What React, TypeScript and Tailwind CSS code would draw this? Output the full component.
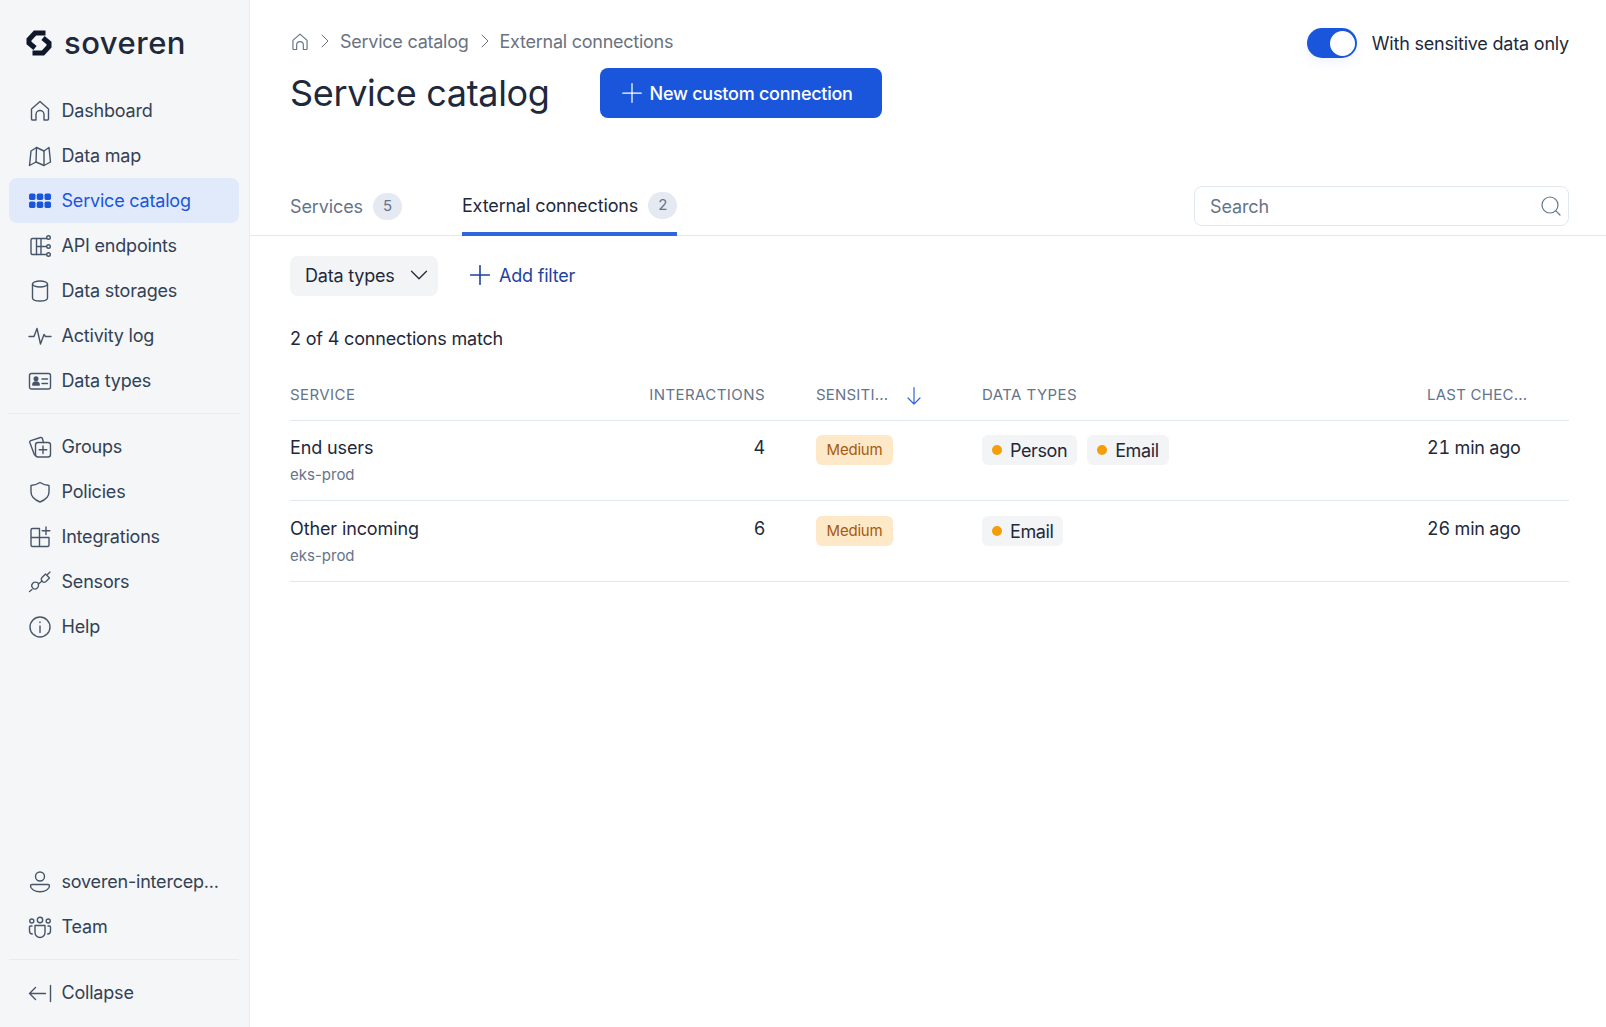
import React from 'react';
import { ChevronDown, ChevronRight, Search } from 'lucide-react';

type IconProps = { className?: string };

const Svg: React.FC<React.PropsWithChildren<IconProps>> = ({ children, className }) => (
  <svg
    viewBox="0 0 24 24"
    fill="none"
    stroke="currentColor"
    strokeWidth={1.4}
    strokeLinecap="round"
    strokeLinejoin="round"
    className={className ?? 'block w-6 h-6 shrink-0'}
  >
    {children}
  </svg>
);

const HomeIcon = ({ className }: IconProps) => (
  <Svg className={className}>
    <path d="M3.500 20V10L12 2.500l8.500 7.500v10a1 1 0 0 1-1 1H16v-5.500a4 4 0 0 0-8 0V21H4.500a1 1 0 0 1-1-1z" />
  </Svg>
);
const MapIcon = () => (
  <Svg>
    <path d="M8.500 3.500 3 7 1.500 21.500 8 18l8 3.500 6.500-3.500L21 3.500 16 7 8.500 3.500z" />
    <path d="M8.500 3.500 8 18M16 7v14.500" />
  </Svg>
);
const GridIcon = () => (
  <svg viewBox="0 0 24 24" fill="currentColor" className="block w-6 h-6 shrink-0">
    <rect x="1" y="4.500" width="6.500" height="6.500" rx="1.700" />
    <rect x="8.750" y="4.500" width="6.500" height="6.500" rx="1.700" />
    <rect x="16.500" y="4.500" width="6.500" height="6.500" rx="1.700" />
    <rect x="1" y="12.500" width="6.500" height="6.500" rx="1.700" />
    <rect x="8.750" y="12.500" width="6.500" height="6.500" rx="1.700" />
    <rect x="16.500" y="12.500" width="6.500" height="6.500" rx="1.700" />
  </svg>
);
const ApiIcon = () => (
  <Svg>
    <path d="M18.500 4.500H4.500A1.500 1.500 0 0 0 3 6v13a1.500 1.500 0 0 0 1.500 1.500h13.500" />
    <path d="M8.500 4.500v16M8.500 12.500h9.500M13 5v15" />
    <circle cx="20.500" cy="3.500" r="1.800" />
    <circle cx="20.500" cy="12.500" r="1.800" />
    <circle cx="20.500" cy="20.500" r="1.800" />
  </Svg>
);
const StorageIcon = () => (
  <Svg>
    <ellipse cx="12" cy="5" rx="7.500" ry="3" />
    <path d="M4.500 5v14c0 1.700 3.400 3 7.500 3s7.500-1.300 7.500-3V5" />
  </Svg>
);
const ActivityIcon = () => (
  <Svg>
    <path d="M1 12.500h5L9 4.500l3.500 15.500L16 10.500l1.500 2h5.500" />
  </Svg>
);
const IdIcon = () => (
  <Svg>
    <rect x="1.500" y="4.500" width="21" height="15.500" rx="2" />
    <circle cx="8" cy="9.800" r="1.800" fill="currentColor" />
    <path d="M4.800 16c0-2 1.400-3 3.200-3s3.200 1 3.200 3z" fill="currentColor" />
    <path d="M14 10h5.500M14 14.500h5.500" />
  </Svg>
);
const GroupsIcon = () => (
  <Svg>
    <path d="M6.500 20 1.800 7.500a1.500 1.500 0 0 1 1-1.900L12.500 2.500a1.500 1.500 0 0 1 1.900 1l1.100 4" />
    <rect x="7.500" y="7.500" width="15" height="14.500" rx="2.500" />
    <path d="M15 11v7.500M11.200 14.800h7.600" />
  </Svg>
);
const ShieldIcon = () => (
  <Svg>
    <path d="M12 2.500c3 2 5.500 2.800 9 3V12c0 4.800-3.500 7.800-9 10C6.500 19.800 3 16.800 3 12V5.500c3.500-.2 6-1 9-3z" />
  </Svg>
);
const IntegrationsIcon = () => (
  <Svg>
    <path d="M11.500 3.500h-7A1.500 1.500 0 0 0 3 5v15a1.500 1.500 0 0 0 1.500 1.500h15A1.500 1.500 0 0 0 21 20v-7.500H3M11.500 3.500v18" />
    <path d="M18 2v7.500M14.200 5.800h7.600" />
  </Svg>
);
const PlugIcon = () => (
  <svg viewBox="0 0 24 24" fill="none" stroke="currentColor" strokeWidth={1.25} strokeLinecap="round" strokeLinejoin="round" className="block w-6 h-6 shrink-0">
    <path d="M1.500 21.500l2.500-2" />
    <path d="M9.500 11.500c-2-.8-3.500-.5-4.800.8-1.300 1.400-1.300 3.300 0 4.700 1.400 1.300 3.300 1.300 4.600 0 1.300-1.300 1.600-2.900.8-4.800z" transform="translate(0 1)" />
    <path d="M10.500 14l3.500-3" />
    <path d="M14 7.500l3.500-3.500 4 4-3.500 3.500c-1.200 1-2.700 1-3.800-.2-1.100-1.100-1.300-2.600-.2-3.800z" />
    <path d="M22 2l-2.500 2.500" />
  </svg>
);
const InfoIcon = () => (
  <Svg>
    <circle cx="12" cy="12" r="10" />
    <path d="M12 11v6.500M12 7v.5" />
  </Svg>
);
const UserIcon = () => (
  <Svg>
    <circle cx="12" cy="6.500" r="4.500" />
    <path d="M4 14.500h16a1.500 1.500 0 0 1 1.500 1.500c0 3-4.200 5.800-9.500 5.800S2.500 19 2.500 16A1.500 1.500 0 0 1 4 14.500z" />
  </Svg>
);
const TeamIcon = () => (
  <Svg>
    <circle cx="12" cy="5" r="2.700" />
    <circle cx="3.800" cy="6" r="2" />
    <circle cx="20.200" cy="6" r="2" />
    <path d="M7 10.500h10v7a5 5 0 0 1-10 0z" />
    <path d="M4 11H2.500a1 1 0 0 0-1 1v4c0 1.700 1 3 2.800 3M20 11h1.500a1 1 0 0 1 1 1v4c0 1.700-1 3-2.800 3" />
  </Svg>
);
const CollapseIcon = () => (
  <Svg>
    <path d="M1.500 12.500h16M7.500 6.500l-6 6 6 6M22.500 4.500v16" />
  </Svg>
);

const PlusIcon = ({ strokeWidth = 1.25 }: { strokeWidth?: number }) => (
  <svg viewBox="0 0 20 20" className="block w-5 h-5 shrink-0" fill="none" stroke="currentColor" strokeWidth={strokeWidth} strokeLinecap="round">
    <path d="M10 .7v18.600M.7 10h18.600" />
  </svg>
);

const SortArrow = () => (
  <svg viewBox="0 0 14 18" className="block w-[14px] h-[18px] shrink-0 text-[#2f65dd]" fill="none" stroke="currentColor" strokeWidth={1.2} strokeLinecap="round" strokeLinejoin="round">
    <path d="M7 .7v16.300M1 11l6 6 6-6" />
  </svg>
);

const Logo = () => (
  <svg viewBox="0 0 26 26" className="block w-[26px] h-[26px] shrink-0" fill="none" stroke="#0f172a" strokeWidth={5}>
    <path d="M19.500 3H9L3 9.500v3.500L9 18" />
    <path d="M6.500 23H17l6-6.500V13l-6-5" />
  </svg>
);

const NavItem = ({ icon, label, active }: { icon: React.ReactNode; label: string; active?: boolean }) => (
  <div
    className={`flex items-center h-[45px] pl-[19px] gap-[9.5px] rounded-lg ${
      active ? 'bg-[#e1eafb] text-[#1a56db]' : 'text-[#334155]'
    }`}
  >
    <span className={active ? 'text-[#1a56db]' : 'text-[#475569]'}>{icon}</span>
    <span className="truncate">{label}</span>
  </div>
);

const Tag = ({ label }: { label: string }) => (
  <span className="inline-flex items-center h-[30px] px-[10px] gap-[8px] rounded-md bg-[#f3f4f6] text-[#1e293b] tracking-[-0.4px]">
    <span className="w-[10px] h-[10px] rounded-full bg-[#f59e0b]" />
    {label}
  </span>
);

const Medium = () => (
  <span className="inline-flex items-center justify-center w-[77px] h-[30px] rounded-md bg-[#fde8c8] text-[#a8590f] text-[15px]">
    Medium
  </span>
);

const rows = [
  { name: 'End users', count: 4, types: ['Person', 'Email'], last: '21 min ago' },
  { name: 'Other incoming', count: 6, types: ['Email'], last: '26 min ago' },
];

const columns = 'grid grid-cols-[360px_166px_166px_445px_142px]';

export default function App() {
  return (
    <div
      className="flex w-full h-[1027px] overflow-hidden bg-white text-[18px] tracking-[-0.2px] text-[#1e293b]"
      style={{ fontFamily: 'Inter, sans-serif' }}
    >
      {/* Sidebar */}
      <aside className="flex flex-col w-[250px] shrink-0 bg-[#f5f6f8] border-r border-[#e9ebef] pl-[9px] pr-[10px]">
        <div className="flex items-center h-[86px] mb-[2px] pl-[17px] gap-[12px]">
          <Logo />
          <span className="text-[31px] font-medium tracking-[0.5px] text-[#1e293b]">soveren</span>
        </div>
        <nav>
          <NavItem icon={<HomeIcon />} label="Dashboard" />
          <NavItem icon={<MapIcon />} label="Data map" />
          <NavItem icon={<GridIcon />} label="Service catalog" active />
          <NavItem icon={<ApiIcon />} label="API endpoints" />
          <NavItem icon={<StorageIcon />} label="Data storages" />
          <NavItem icon={<ActivityIcon />} label="Activity log" />
          <NavItem icon={<IdIcon />} label="Data types" />
        </nav>
        <div className="border-t border-[#e9ebef] mt-[10px] mb-[10px]" />
        <nav>
          <NavItem icon={<GroupsIcon />} label="Groups" />
          <NavItem icon={<ShieldIcon />} label="Policies" />
          <NavItem icon={<IntegrationsIcon />} label="Integrations" />
          <NavItem icon={<PlugIcon />} label="Sensors" />
          <NavItem icon={<InfoIcon />} label="Help" />
        </nav>
        <div className="mt-auto">
          <NavItem icon={<UserIcon />} label="soveren-intercep..." />
          <NavItem icon={<TeamIcon />} label="Team" />
          <div className="border-t border-[#e9ebef] mt-[10px] mb-[10px]" />
          <NavItem icon={<CollapseIcon />} label="Collapse" />
          <div className="h-[12px]" />
        </div>
      </aside>

      {/* Main */}
      <main className="flex-1 min-w-0">
        <div className="flex justify-between pl-[40px] pr-[37px] h-[175px]">
          <div>
            <div className="flex items-center h-[24px] mt-[29px] text-[#6b7280] tracking-[-0.25px]">
              <HomeIcon className="block w-[20px] h-[20px] mt-[1px] text-[#64748b]" />
              <ChevronRight className="w-[24px] h-[24px] ml-[3px] mr-[3px]" strokeWidth={1} />
              <span>Service catalog</span>
              <ChevronRight className="w-[24px] h-[24px] ml-[4px] mr-[3px]" strokeWidth={1} />
              <span>External connections</span>
            </div>
            <div className="flex items-center mt-[15px] gap-[50px]">
              <h1 className="text-[36px] font-normal tracking-[-0.33px] text-[#1e293b] leading-[50px]">Service catalog</h1>
              <button className="flex items-center h-[50px] w-[282px] pl-[22px] gap-[8px] rounded-lg bg-[#1a56db] text-white font-medium tracking-[-0.25px]">
                <PlusIcon />
                New custom connection
              </button>
            </div>
          </div>
          <div className="flex items-center h-[30px] mt-[28px] gap-[15px]">
            <div className="flex items-center justify-end w-[50px] h-[30px] rounded-full bg-[#1a56db] pr-[2px] shadow-[0_4px_12px_rgba(26,86,219,0.08)]">
              <span className="w-[25px] h-[25px] rounded-full bg-white" />
            </div>
            <span>With sensitive data only</span>
          </div>
        </div>

        {/* Tabs */}
        <div className="flex items-end h-[61px] pl-[40px] pr-[37px] border-b border-[#e5e7eb] tracking-[-0.12px]">
          <div className="flex items-center h-full gap-[10px] text-[#64748b] mr-[60px] pt-[3px]">
            Services
            <span className="flex items-center justify-center w-[29px] h-[27px] rounded-full bg-[#e5e9f2] text-[#64748b] text-[15px]">5</span>
          </div>
          <div className="flex items-center h-full gap-[10px] pt-[3px] border-b-[4px] border-[#2f65dd] text-[#1e293b] -mb-px">
            External connections
            <span className="flex items-center justify-center w-[29px] h-[27px] rounded-full bg-[#e5e9f2] text-[#64748b] text-[15px]">2</span>
          </div>
          <div className="ml-auto self-center flex items-center w-[375px] h-[40px] mt-[2px] pl-[15px] pr-[5px] rounded-lg border border-[#e2e8f0] text-[#64748b]">
            <span className="flex-1">Search</span>
            <Search className="w-[24px] h-[24px]" strokeWidth={1.2} />
          </div>
        </div>

        {/* Filters */}
        <div className="flex items-center pl-[40px] mt-[20px] gap-[32px]">
          <div className="flex items-center h-[40px] w-[148px] pl-[15px] pb-[2px] gap-[9px] rounded-lg bg-[#f3f4f6] text-[#1e293b]">
            Data types
            <ChevronDown className="w-[30px] h-[30px] shrink-0" strokeWidth={1} />
          </div>
          <div className="flex items-center pb-[2px] gap-[9px] text-[#1e429f]">
            <PlusIcon strokeWidth={1.6} />
            Add filter
          </div>
        </div>

        <div className="pl-[40px] mt-[31px] leading-[24px] tracking-[-0.17px]">2 of 4 connections match</div>

        {/* Table */}
        <div className="pl-[40px] pr-[37px] mt-[20px]">
          <div className={`${columns} items-center h-[50px] border-b border-[#e2e8f0] text-[15px] tracking-[0.43px] text-[#64748b]`}>
            <span>SERVICE</span>
            <span className="col-span-1 text-right pr-[51px] -ml-[60px]">INTERACTIONS</span>
            <span className="flex items-center gap-[19px] tracking-[0.2px]">
              SENSITI...
              <SortArrow />
            </span>
            <span>DATA TYPES</span>
            <span className="tracking-[0.25px]">LAST CHEC...</span>
          </div>
          {rows.map((r, i) => (
            <div key={r.name} className={`${columns} ${i === 0 ? 'h-[80px] pt-[14px]' : 'h-[81px] pt-[15px]'} border-b border-[#e2e8f0]`}>
              <div>
                <div className="leading-[26px] tracking-[-0.12px]">{r.name}</div>
                <div className="leading-[26px] mt-[1px] text-[15px] tracking-normal text-[#64748b]">eks-prod</div>
              </div>
              <div className="text-right pr-[51px] leading-[26px]">{r.count}</div>
              <div><Medium /></div>
              <div className="flex gap-[10px] items-start">
                {r.types.map((t) => <Tag key={t} label={t} />)}
              </div>
              <div className="leading-[26px] tabular-nums">{r.last}</div>
            </div>
          ))}
        </div>
      </main>
    </div>
  );
}
